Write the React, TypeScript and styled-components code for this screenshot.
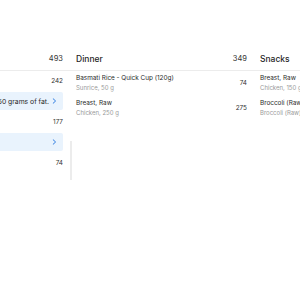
import React from "react";
import styled, { createGlobalStyle } from "styled-components";

type Food = {
  id: string;
  name: string;
  detail?: string;
  kcal?: number;
  tip?: { label?: string; message?: string };
};

type Meal = {
  id: string;
  title: string;
  total: number;
  items: Food[];
  handle?: boolean;
};

const meals: Meal[] = [
  {
    id: "lunch",
    title: "Lunch",
    total: 493,
    handle: true,
    items: [
      { id: "l1", name: "Cheese Burger", kcal: 242 },
      { id: "l1t", name: "", tip: { message: "This meal has more than 50 grams of fat." } },
      { id: "l2", name: "Fries", kcal: 177 },
      { id: "l2t", name: "", tip: { label: "Add a note" } },
      { id: "l3", name: "Cola", kcal: 74 },
    ],
  },
  {
    id: "dinner",
    title: "Dinner",
    total: 349,
    items: [
      { id: "d1", name: "Basmati Rice - Quick Cup (120g)", detail: "Sunrice, 50 g", kcal: 74 },
      { id: "d2", name: "Breast, Raw", detail: "Chicken, 250 g", kcal: 275 },
    ],
  },
  {
    id: "snacks",
    title: "Snacks",
    total: 211,
    items: [
      { id: "s1", name: "Breast, Raw", detail: "Chicken, 150 g", kcal: 165 },
      { id: "s2", name: "Broccoli (Raw, Chopped)", detail: "Broccoli (Raw), 100 g", kcal: 46 },
    ],
  },
];

const GlobalStyle = createGlobalStyle`
  html, body {
    margin: 0;
    padding: 0;
    background: #ffffff;
    font-family: Inter, "Liberation Sans", sans-serif;
    overflow: hidden;
  }
`;

const Viewport = styled.div`
  width: 300px;
  height: 300px;
  overflow: hidden;
  background: #ffffff;
`;

const Board = styled.div`
  display: flex;
  margin-top: 47px;
  margin-left: -114px;
  width: max-content;
`;

const Column = styled.div`
  position: relative;
  width: 184px;
  display: flex;
  flex-direction: column;
`;

const Header = styled.div`
  height: 23px;
  display: flex;
  align-items: center;
  justify-content: space-between;
  padding: 0 7px 0 6px;
  border-bottom: 1px solid #ececec;
`;

const Title = styled.div`
  font-size: 8.5px;
  font-weight: 500;
  color: #1f1f1f;
`;

const Total = styled.div`
  font-size: 7.5px;
  color: #333333;
`;

const Rows = styled.div`
  display: flex;
  flex-direction: column;
  padding: 0 7px 0 6px;
`;

const Row = styled.div<{ $tall: boolean }>`
  height: ${(p) => (p.$tall ? "25px" : "19px")};
  padding-bottom: ${(p) => (p.$tall ? "2px" : "0")};
  box-sizing: border-box;
  display: flex;
  align-items: center;
  justify-content: space-between;
  white-space: nowrap;
`;

const Info = styled.div`
  display: flex;
  flex-direction: column;
`;

const Name = styled.div`
  font-size: 6.4px;
  line-height: 9px;
  color: #2a2a2a;
`;

const Detail = styled.div`
  font-size: 6px;
  line-height: 9px;
  color: #9a9a9a;
`;

const Kcal = styled.div`
  font-size: 6.4px;
  color: #333333;
`;

const Tip = styled.div`
  height: 18px;
  margin: 2px 0;
  padding: 0 6px 0 6px;
  border-radius: 2px;
  background: #e9f3fd;
  display: flex;
  align-items: center;
  gap: 3px;
  white-space: nowrap;
  font-size: 6.8px;
  color: #2a2a2a;
`;

const TipLabel = styled.span`
  flex: 1;
  min-width: 0;
  overflow: hidden;
  font-weight: 500;
`;

const Chevron = styled.svg`
  width: 5px;
  height: 6px;
  flex-shrink: 0;
`;

const Handle = styled.div`
  position: absolute;
  right: -2px;
  top: 94px;
  width: 2px;
  height: 39px;
  background: #ececec;
`;

const App: React.FC = () => {
  return (
    <Viewport>
      <GlobalStyle />
      <Board>
        {meals.map((meal) => (
          <Column key={meal.id}>
            <Header>
              <Title>{meal.title}</Title>
              <Total>{meal.total}</Total>
            </Header>
            <Rows>
              {meal.items.map((food) =>
                food.tip ? (
                  <Tip key={food.id}>
                    <TipLabel>{food.tip.label}</TipLabel>
                    {food.tip.message && <span>{food.tip.message}</span>}
                    <Chevron viewBox="0 0 5 6">
                      <path d="M1.2 0.8 L3.6 3 L1.2 5.2" fill="none" stroke="#2f7de1" strokeWidth="1" strokeLinecap="round" strokeLinejoin="round" />
                    </Chevron>
                  </Tip>
                ) : (
                  <Row key={food.id} $tall={!!food.detail}>
                    <Info>
                      <Name>{food.name}</Name>
                      {food.detail && <Detail>{food.detail}</Detail>}
                    </Info>
                    <Kcal>{food.kcal}</Kcal>
                  </Row>
                )
              )}
            </Rows>
            {meal.handle && <Handle />}
          </Column>
        ))}
      </Board>
    </Viewport>
  );
};

export default App;
